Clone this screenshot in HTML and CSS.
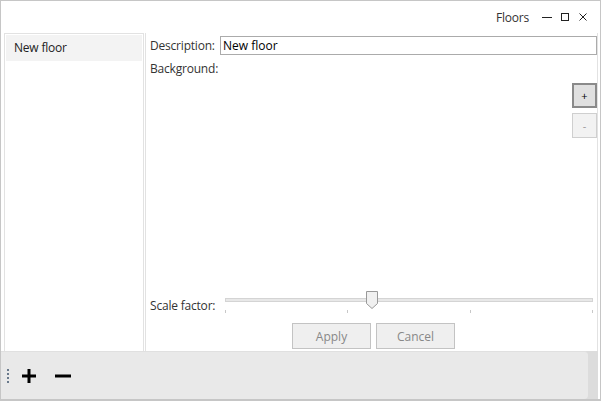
FILE: index.html
```html
<!DOCTYPE html>
<html lang="en">
<head>
<meta charset="UTF-8">
<title>Floors</title>
<link rel="stylesheet" href="styles.css">
</head>
<body>
    <div class="window">
        <div class="titlebar">
            <span class="title">Floors</span>
            <span class="win-btn">
                <svg viewBox="0 0 10 10" width="10" height="10"><path d="M0 5.5h10" stroke="#222" stroke-width="1"/></svg>
            </span>
            <span class="win-btn">
                <svg viewBox="0 0 10 10" width="10" height="10"><rect x="1.5" y="1.5" width="7" height="7" fill="none" stroke="#222" stroke-width="1"/></svg>
            </span>
            <span class="win-btn">
                <svg viewBox="0 0 10 10" width="10" height="10"><path d="M1.5 1.5l7 7M8.5 1.5l-7 7" stroke="#222" stroke-width="1"/></svg>
            </span>
        </div>

        <div class="main">
            <!-- floors list -->
            <div class="floor-list">
                <div class="floor-item selected">New floor</div>
            </div>

            <!-- details -->
            <div class="detail">
                <div class="field-row">
                    <label class="lbl">Description:</label>
                    <input class="text-input" type="text" value="New floor">
                </div>
                <div class="lbl bg-label">Background:</div>
                <div class="bg-area">
                    <div class="side-btns">
                        <button class="sq-btn pressed">+</button>
                        <button class="sq-btn">-</button>
                    </div>
                </div>
                <div class="scale-row">
                    <span class="lbl">Scale factor:</span>
                    <div class="slider">
                        <div class="track"></div>
                        <div class="thumb">
                            <svg viewBox="0 0 12 18" width="12" height="18"><path d="M0.5 0.5h11v12l-5.5 5-5.5-5z" fill="#f0f0f0" stroke="#999"/></svg>
                        </div>
                        <div class="ticks">
                            <i></i><i></i><i></i><i></i>
                        </div>
                    </div>
                </div>
                <div class="actions">
                    <button class="btn">Apply</button>
                    <button class="btn">Cancel</button>
                </div>
            </div>
        </div>

        <!-- bottom toolbar -->
        <div class="toolbar">
            <div class="toolbar-body">
                <span class="grip"><i></i><i></i><i></i><i></i></span>
                <span class="tool">
                    <svg viewBox="0 0 16 16" width="16" height="16"><path d="M8 1v14M1 8h14" stroke="#000" stroke-width="3"/></svg>
                </span>
                <span class="tool">
                    <svg viewBox="0 0 18 16" width="18" height="16"><path d="M1 8h16" stroke="#000" stroke-width="3"/></svg>
                </span>
            </div>
            <div class="toolbar-end"></div>
        </div>
    </div>
</body>
</html>
```
FILE: styles.css
```css
*{margin:0;padding:0;box-sizing:border-box}
body{
    font-family:"Open Sans","Noto Sans","Liberation Sans",sans-serif;
    font-size:12px;
    letter-spacing:-0.2px;
    color:#1e1e1e;
    background:#fff;
}

.window{
    width:601px;
    height:401px;
    border:1px solid #c6c6c6;
    border-bottom-width:2px;
    display:flex;
    flex-direction:column;
    background:#fff;
}

/* title bar */
.titlebar{
    height:32px;
    flex:none;
    display:flex;
    align-items:center;
    justify-content:flex-end;
    padding:0 8px 0 0;
}
.title{
    margin-right:9px;
    color:#333;
}
.win-btn{
    width:18px;
    display:flex;
    justify-content:center;
}

/* main area */
.main{
    flex:1;
    display:flex;
    padding:0 2px 0 3px;
    min-height:0;
}
.floor-list{
    width:140px;
    border:1px solid #e2e2e2;
    border-bottom:none;
    padding:1px;
}
.floor-item{
    height:26px;
    line-height:26px;
    padding-left:8px;
    color:#222;
}
.floor-item.selected{background:#f3f3f3}

.detail{
    flex:1;
    display:flex;
    flex-direction:column;
    border-left:1px solid #e2e2e2;
    border-right:1px solid #e2e2e2;
    margin-left:1px;
    padding:3px 0 0 4px;
}
.lbl{color:#333}
.field-row{
    display:flex;
    align-items:center;
    height:19px;
}
.field-row .lbl{width:70px}
.text-input{
    flex:1;
    height:19px;
    border:1px solid #ababab;
    font:inherit;
    color:#000;
    padding:0 2px;
    outline:none;
}
.bg-label{
    margin-top:5px;
    line-height:18px;
}
.bg-area{
    flex:1;
    display:flex;
    justify-content:flex-end;
    padding-top:5px;
}
.side-btns{
    display:flex;
    flex-direction:column;
    gap:5px;
}
.sq-btn{
    width:25px;
    height:25px;
    border:1px solid #cfcfcf;
    background:#f2f2f2;
    color:#999;
    font:inherit;
    font-size:11px;
}
.sq-btn.pressed{
    border:2px solid #8a8a8a;
    background:#e0e0e0;
    color:#000;
}

/* slider */
.scale-row{
    display:flex;
    align-items:flex-start;
    height:23px;
    margin-bottom:6px;
}
.scale-row .lbl{
    width:75px;
    padding-top:3px;
}
.slider{
    position:relative;
    width:368px;
    height:23px;
}
.track{
    margin-top:4px;
    height:4px;
    border:1px solid #d4d4d4;
    background:#e8e8e8;
}
.thumb{
    position:absolute;
    left:141px;
    top:-3px;
}
.ticks{
    display:flex;
    justify-content:space-between;
    margin-top:8px;
}
.ticks i{
    width:1px;
    height:3px;
    background:#c8c8c8;
}

.actions{
    display:flex;
    justify-content:center;
    gap:5px;
    padding:0 0 2px 0;
}
.btn{
    width:79px;
    height:26px;
    border:1px solid #c3c3c3;
    background:#efefef;
    color:#888;
    font:inherit;
}

/* toolbar */
.toolbar{
    height:48px;
    flex:none;
    display:flex;
    background:#dcdcdc;
    margin:0 2px 0 0;
}
.toolbar-body{
    flex:1;
    display:flex;
    align-items:center;
    background:#e9e9e9;
    border-top:1px solid #e0e0e0;
    border-radius:0 4px 4px 0;
    padding-left:6px;
}
.toolbar-end{width:10px}
.grip{
    display:flex;
    flex-direction:column;
    gap:2px;
    margin-right:12px;
}
.grip i{
    width:2px;
    height:2px;
    background:#6a7a8c;
}
.tool{
    display:flex;
    margin-right:17px;
}
```
